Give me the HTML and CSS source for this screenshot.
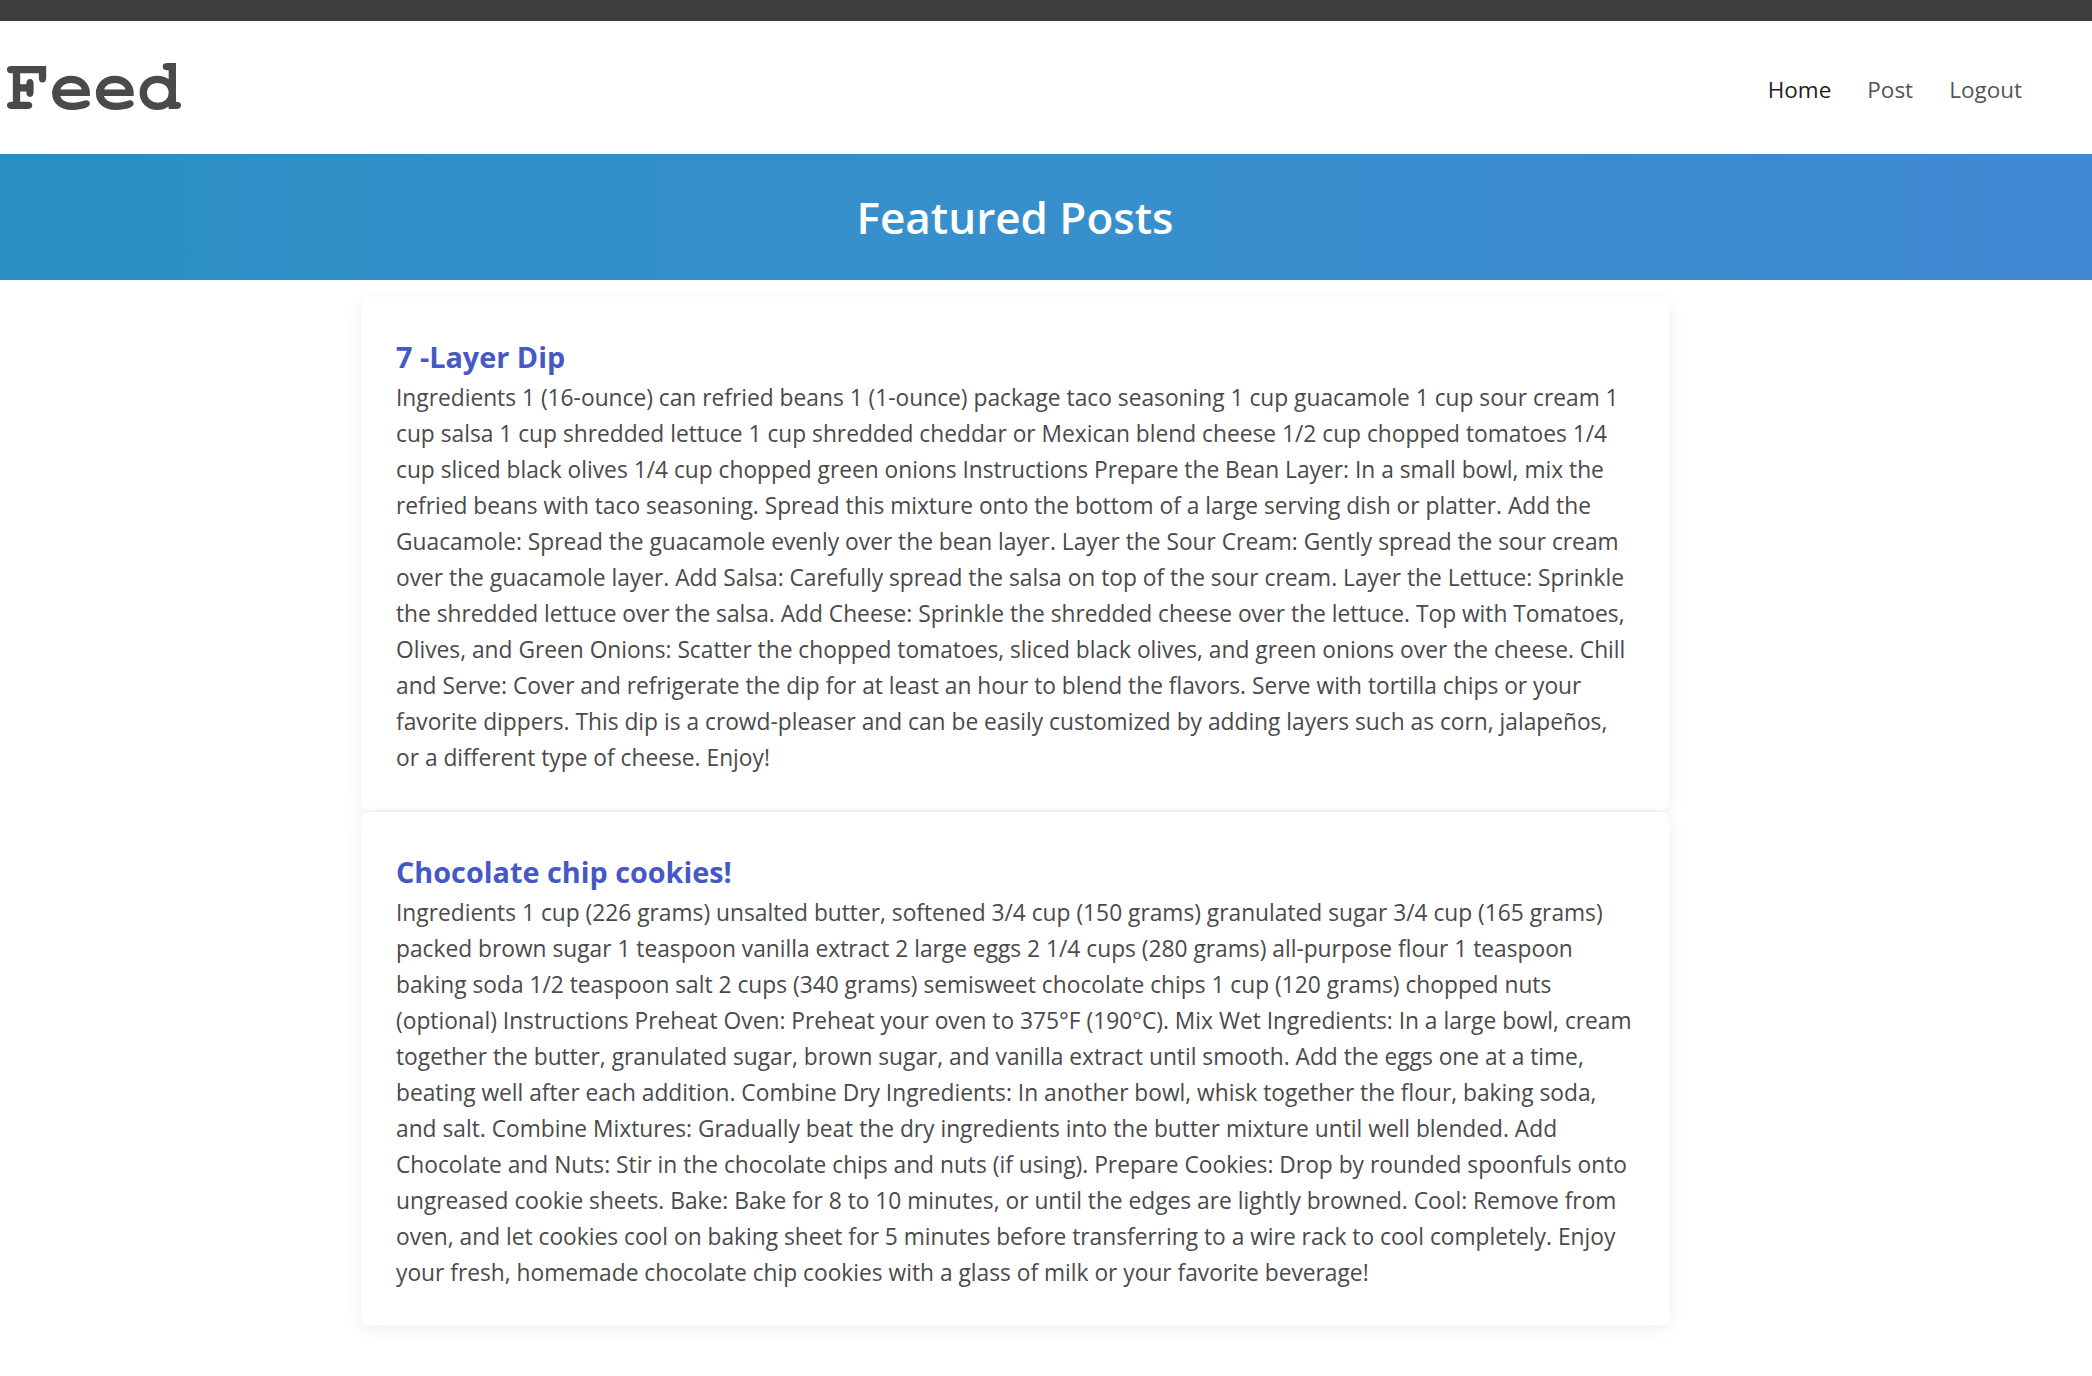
FILE: index.html
```html
<!DOCTYPE html>
<html lang="en">
<head>
<meta charset="utf-8">
<title>Feed</title>
<link rel="stylesheet" href="styles.css">
</head>
<body>
<div class="topbar"></div>
<div class="page">
  <header class="header">
    <div class="logo">Feed</div>
    <nav class="nav">
      <a class="nav-link active" href="#">Home</a>
      <a class="nav-link" href="#">Post</a>
      <a class="nav-link" href="#">Logout</a>
    </nav>
  </header>
</div>
<section class="banner">
  <h1 class="banner-title">Featured Posts</h1>
</section>
<div class="page">
  <main class="feed">
    <article class="card">
      <h2 class="card-title">7 -Layer Dip</h2>
      <p class="card-body">Ingredients 1 (16-ounce) can refried beans 1 (1-ounce) package taco seasoning 1 cup guacamole 1 cup sour cream 1 cup salsa 1 cup shredded lettuce 1 cup shredded cheddar or Mexican blend cheese 1/2 cup chopped tomatoes 1/4 cup sliced black olives 1/4 cup chopped green onions Instructions Prepare the Bean Layer: In a small bowl, mix the refried beans with taco seasoning. Spread this mixture onto the bottom of a large serving dish or platter. Add the Guacamole: Spread the guacamole evenly over the bean layer. Layer the Sour Cream: Gently spread the sour cream over the guacamole layer. Add Salsa: Carefully spread the salsa on top of the sour cream. Layer the Lettuce: Sprinkle the shredded lettuce over the salsa. Add Cheese: Sprinkle the shredded cheese over the lettuce. Top with Tomatoes, Olives, and Green Onions: Scatter the chopped tomatoes, sliced black olives, and green onions over the cheese. Chill and Serve: Cover and refrigerate the dip for at least an hour to blend the flavors. Serve with tortilla chips or your favorite dippers. This dip is a crowd-pleaser and can be easily customized by adding layers such as corn, jalapeños, or a different type of cheese. Enjoy!</p>
    </article>
    <article class="card">
      <h2 class="card-title">Chocolate chip cookies!</h2>
      <p class="card-body">Ingredients 1 cup (226 grams) unsalted butter, softened 3/4 cup (150 grams) granulated sugar 3/4 cup (165 grams) packed brown sugar 1 teaspoon vanilla extract 2 large eggs 2 1/4 cups (280 grams) all-purpose flour 1 teaspoon baking soda 1/2 teaspoon salt 2 cups (340 grams) semisweet chocolate chips 1 cup (120 grams) chopped nuts (optional) Instructions Preheat Oven: Preheat your oven to 375°F (190°C). Mix Wet Ingredients: In a large bowl, cream together the butter, granulated sugar, brown sugar, and vanilla extract until smooth. Add the eggs one at a time, beating well after each addition. Combine Dry Ingredients: In another bowl, whisk together the flour, baking soda, and salt. Combine Mixtures: Gradually beat the dry ingredients into the butter mixture until well blended. Add Chocolate and Nuts: Stir in the chocolate chips and nuts (if using). Prepare Cookies: Drop by rounded spoonfuls onto ungreased cookie sheets. Bake: Bake for 8 to 10 minutes, or until the edges are lightly browned. Cool: Remove from oven, and let cookies cool on baking sheet for 5 minutes before transferring to a wire rack to cool completely. Enjoy your fresh, homemade chocolate chip cookies with a glass of milk or your favorite beverage!</p>
    </article>
  </main>
</div>
</body>
</html>
```

FILE: styles.css
```css
* {
  box-sizing: border-box;
}

html, body {
  margin: 0;
  padding: 0;
  background: #ffffff;
  font-family: "Open Sans", "Noto Sans", "Liberation Sans", sans-serif;
  color: #4a4a4a;
}

.topbar {
  height: 21px;
  background: #3d3d3d;
}

.page {
  padding-right: 62px;
}

.header {
  height: 133px;
  display: flex;
  align-items: center;
  justify-content: space-between;
  padding: 0 8px 0 6px;
}

.logo {
  font-family: "Nimbus Mono PS", "Nimbus Mono L", "FreeMono", "Courier New", "Courier", "Liberation Mono", monospace;
  font-weight: 700;
  font-size: 73px;
  line-height: 1;
  color: #4a4a4a;
}

.nav {
  display: flex;
  gap: 36px;
  padding-top: 3px;
}

.nav-link {
  font-size: 22.5px;
  color: #555555;
  text-decoration: none;
}

.nav-link.active {
  color: #1e1e1e;
}

.banner {
  height: 126px;
  background: linear-gradient(90deg, #2a8fc2 0%, #3690cb 45%, #3c8bd0 85%, #4289d3 100%);
  display: flex;
  align-items: center;
  justify-content: center;
  padding-right: 62px;
}

.banner-title {
  margin: 0;
  font-size: 44px;
  font-weight: 600;
  color: #ffffff;
  line-height: 1;
}

.feed {
  width: 1308px;
  margin: 17px auto 0;
  display: flex;
  flex-direction: column;
  gap: 2px;
  padding-bottom: 60px;
}

.card {
  background: #ffffff;
  border-radius: 8px;
  box-shadow: 0 4px 18px rgba(0, 0, 0, 0.07);
  padding: 37px 35px 34px;
}

.card-title {
  margin: 0;
  font-size: 28.8px;
  line-height: 46px;
  font-weight: 700;
  color: #4658c6;
}

.card-body {
  margin: 0;
  font-size: 22.75px;
  line-height: 36px;
  color: #4a4a4a;
}
```
